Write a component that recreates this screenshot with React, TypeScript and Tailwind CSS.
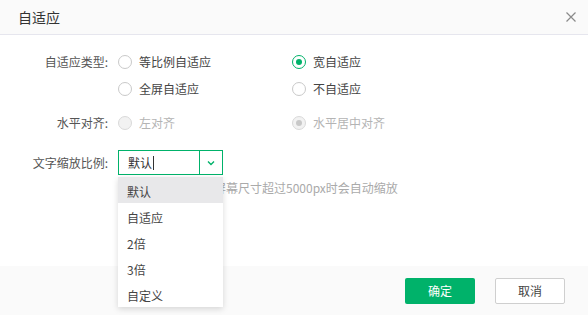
import React from 'react';

const green = '#00b26a';

const Radio = ({ checked = false, disabled = false }: { checked?: boolean; disabled?: boolean }) => {
    if (disabled) {
        return (
            <span className="w-[14px] h-[14px] rounded-full border border-[#d9d9d9] bg-[#f2f2f2] flex items-center justify-center shrink-0">
                {checked && <span className="w-[6px] h-[6px] rounded-full bg-[#c8c8c8]" />}
            </span>
        );
    }
    return (
        <span
            className={`w-[14px] h-[14px] rounded-full border bg-white flex items-center justify-center shrink-0 ${
                checked ? 'border-[#00b26a]' : 'border-[#c9c9c9]'
            }`}
        >
            {checked && <span className="w-[6px] h-[6px] rounded-full bg-[#00b26a]" />}
        </span>
    );
};

const Option = ({ label, checked, disabled }: { label: string; checked?: boolean; disabled?: boolean }) => (
    <div className="flex items-center gap-[7px] h-[20px]">
        <Radio checked={checked} disabled={disabled} />
        <span className={disabled ? 'text-[#b4b4b4]' : 'text-[#444]'}>{label}</span>
    </div>
);

const Row = ({ label, children, className = '' }: { label?: string; children: React.ReactNode; className?: string }) => (
    <div className={`flex items-center ${className}`}>
        <div className="w-[110px] pr-[2px] text-right text-[#555]">{label}</div>
        <div className="pl-[8px] flex items-center">{children}</div>
    </div>
);

const items = ['默认', '自适应', '2倍', '3倍', '自定义'];

export default function App() {
    return (
        <div
            className="w-[588px] h-[315px] bg-white flex flex-col text-[12px] relative overflow-hidden"
            style={{ fontFamily: '"Noto Sans CJK SC", "Noto Sans", sans-serif' }}
        >
            <div className="h-[35px] bg-[#fafafa] border-b border-[#e6e6ee] flex items-center justify-between pl-[18px] pr-[7px] shrink-0">
                <span className="text-[14px] text-[#333]">自适应</span>
                <svg width="20" height="20" viewBox="0 0 20 20" className="text-[#8a8a8a]">
                    <path d="M5.5 5.5 L14.5 14.5 M14.5 5.5 L5.5 14.5" stroke="currentColor" strokeWidth="1.2" />
                </svg>
            </div>

            <div className="flex-1 pt-[17px]">
                <Row label="自适应类型:" className="h-[20px]">
                    <div className="w-[174px]">
                        <Option label="等比例自适应" />
                    </div>
                    <Option label="宽自适应" checked />
                </Row>
                <Row className="h-[20px] mt-[7px]">
                    <div className="w-[174px]">
                        <Option label="全屏自适应" />
                    </div>
                    <Option label="不自适应" />
                </Row>
                <Row label="水平对齐:" className="h-[20px] mt-[14px]">
                    <div className="w-[174px]">
                        <Option label="左对齐" disabled />
                    </div>
                    <Option label="水平居中对齐" checked disabled />
                </Row>
                <Row label="文字缩放比例:" className="h-[25px] mt-[17px]">
                    <div className="w-[105px] h-[25px] border border-[#00b26a] flex">
                        <div className="flex-1 flex items-center pl-[9px] text-[#333]">
                            默认<span className="w-px h-[14px] bg-[#333] ml-[1px]" />
                        </div>
                        <div className="w-[23px] border-l border-[#00b26a] flex items-center justify-center">
                            <svg width="10" height="10" viewBox="0 0 10 10">
                                <path d="M2 3.5 L5 6.5 L8 3.5" stroke={green} strokeWidth="1.4" fill="none" />
                            </svg>
                        </div>
                    </div>
                </Row>
                <Row className="mt-[5px] h-[16px]">
                    <span className="text-[#aaa]">默认情况下，当前屏幕尺寸超过5000px时会自动缩放</span>
                </Row>
            </div>

            <div className="h-[49px] bg-[#fafafa] flex items-center justify-end gap-[20px] pr-[23px] shrink-0">
                <button className="w-[70px] h-[26px] rounded-[2px] bg-[#00b26a] text-white text-[12px]">确定</button>
                <button className="w-[70px] h-[26px] rounded-[2px] bg-white border border-[#cfcfcf] text-[#444] text-[12px]">
                    取消
                </button>
            </div>

            <div className="absolute left-[118px] top-[177px] w-[105px] bg-white shadow-[0_2px_6px_rgba(0,0,0,0.15)]">
                {items.map((it, i) => (
                    <div
                        key={it}
                        className={`h-[26px] flex items-center pl-[9px] pt-[4px] text-[#444] ${i === 0 ? 'bg-[#e8e8ea]' : ''}`}
                    >
                        {it}
                    </div>
                ))}
            </div>
        </div>
    );
}
